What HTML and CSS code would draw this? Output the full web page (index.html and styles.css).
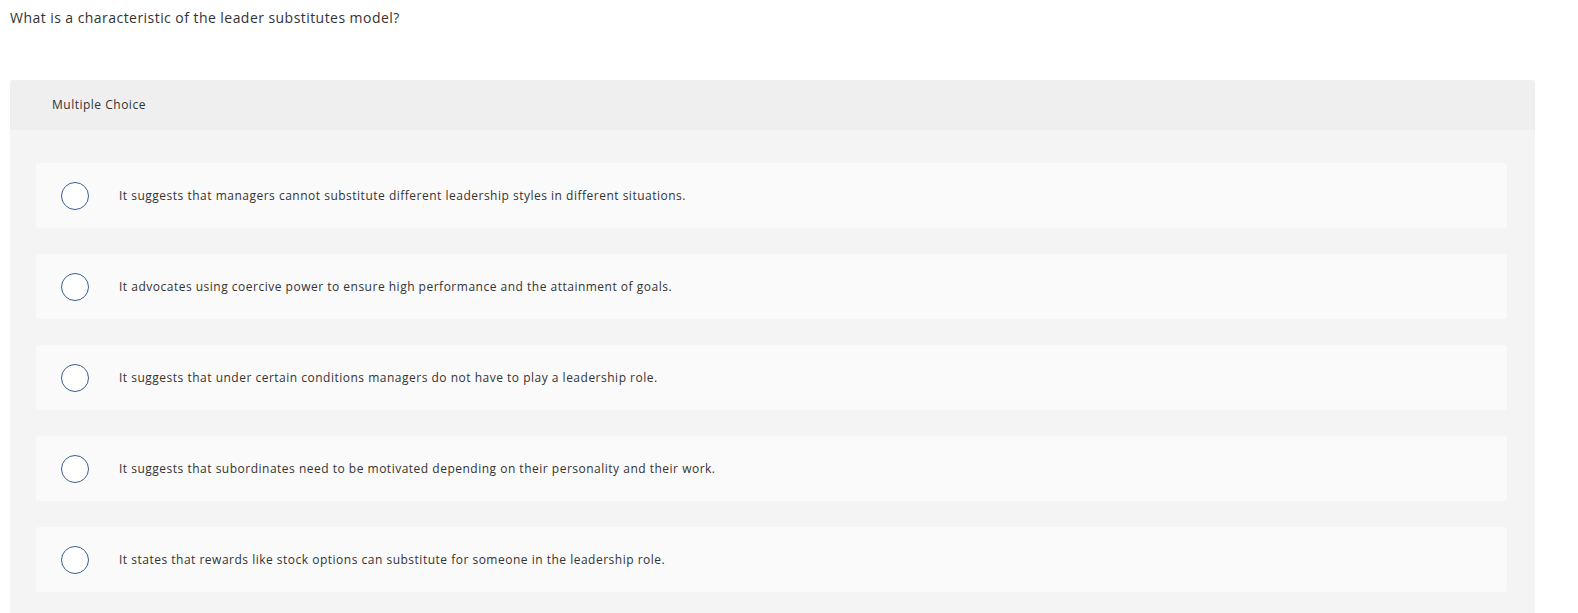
FILE: index.html
```html
<!DOCTYPE html>
<html lang="en">
<head>
    <meta charset="UTF-8">
    <meta name="viewport" content="width=device-width, initial-scale=1.0">
    <title>Question</title>
    <link rel="stylesheet" href="styles.css">
</head>
<body>
    <p class="prompt">What is a characteristic of the leader substitutes model?</p>
    <div class="question">
        <div class="question-head">Multiple Choice</div>
        <div class="choices">
            <label class="choice">
                <input type="radio" name="answer">
                <span class="choice-text">It suggests that managers cannot substitute different leadership styles in different situations.</span>
            </label>
            <label class="choice">
                <input type="radio" name="answer">
                <span class="choice-text">It advocates using coercive power to ensure high performance and the attainment of goals.</span>
            </label>
            <label class="choice">
                <input type="radio" name="answer">
                <span class="choice-text">It suggests that under certain conditions managers do not have to play a leadership role.</span>
            </label>
            <label class="choice">
                <input type="radio" name="answer">
                <span class="choice-text">It suggests that subordinates need to be motivated depending on their personality and their work.</span>
            </label>
            <label class="choice">
                <input type="radio" name="answer">
                <span class="choice-text">It states that rewards like stock options can substitute for someone in the leadership role.</span>
            </label>
        </div>
    </div>
</body>
</html>
```

FILE: styles.css
```css
* {
    box-sizing: border-box;
    margin: 0;
    padding: 0;
}

body {
    font-family: "Open Sans", sans-serif;
    background-color: #fff;
    color: #333;
    padding: 0 43px 0 10px;
    overflow: hidden;
}

.prompt {
    font-size: 14px;
    line-height: 20px;
    letter-spacing: 0.45px;
    padding-top: 8px;
    height: 80px;
}

.question {
    background-color: #f4f4f4;
    border-radius: 3px 3px 0 0;
    padding-bottom: 30px;
}

.question-head {
    background-color: #efefef;
    border-radius: 3px 3px 0 0;
    height: 50px;
    padding-left: 42px;
    font-size: 12px;
    letter-spacing: 0.5px;
    line-height: 50px;
}

.choices {
    display: flex;
    flex-direction: column;
    gap: 26px;
    padding: 33px 28px 0 26px;
}

.choice {
    display: flex;
    align-items: center;
    height: 65px;
    background-color: #fafafa;
    border-radius: 3px;
    padding-left: 25px;
    cursor: pointer;
}

.choice input {
    appearance: none;
    width: 28px;
    height: 28px;
    border: 1.5px solid #3a5e92;
    border-radius: 50%;
    background-color: #fff;
    margin-right: 30px;
    flex-shrink: 0;
    cursor: pointer;
}

.choice-text {
    font-size: 12px;
    letter-spacing: 0.5px;
}
```
